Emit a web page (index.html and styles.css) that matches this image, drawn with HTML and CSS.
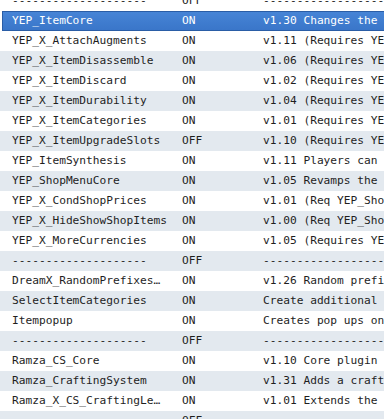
FILE: index.html
```html
<!DOCTYPE html>
<html lang="en">
<head>
    <meta charset="UTF-8">
    <title>Plugin Manager</title>
    <link rel="stylesheet" href="styles.css">
</head>
<body>
    <div class="plugin-list">
        <div class="row"><span class="name">--------------------</span><span class="status">OFF</span><span class="desc">--------------------------------</span></div>
        <div class="row selected"><span class="name">YEP_ItemCore</span><span class="status">ON</span><span class="desc">v1.30 Changes the way Items are handled</span></div>
        <div class="row"><span class="name">YEP_X_AttachAugments</span><span class="status">ON</span><span class="desc">v1.11 (Requires YEP_ItemCore)</span></div>
        <div class="row"><span class="name">YEP_X_ItemDisassemble</span><span class="status">ON</span><span class="desc">v1.06 (Requires YEP_ItemCore)</span></div>
        <div class="row"><span class="name">YEP_X_ItemDiscard</span><span class="status">ON</span><span class="desc">v1.02 (Requires YEP_ItemCore)</span></div>
        <div class="row"><span class="name">YEP_X_ItemDurability</span><span class="status">ON</span><span class="desc">v1.04 (Requires YEP_ItemCore)</span></div>
        <div class="row"><span class="name">YEP_X_ItemCategories</span><span class="status">ON</span><span class="desc">v1.01 (Requires YEP_ItemCore)</span></div>
        <div class="row"><span class="name">YEP_X_ItemUpgradeSlots</span><span class="status">OFF</span><span class="desc">v1.10 (Requires YEP_ItemCore)</span></div>
        <div class="row"><span class="name">YEP_ItemSynthesis</span><span class="status">ON</span><span class="desc">v1.11 Players can combine items</span></div>
        <div class="row"><span class="name">YEP_ShopMenuCore</span><span class="status">ON</span><span class="desc">v1.05 Revamps the shop scene</span></div>
        <div class="row"><span class="name">YEP_X_CondShopPrices</span><span class="status">ON</span><span class="desc">v1.01 (Req YEP_ShopMenuCore)</span></div>
        <div class="row"><span class="name">YEP_X_HideShowShopItems</span><span class="status">ON</span><span class="desc">v1.00 (Req YEP_ShopMenuCore)</span></div>
        <div class="row"><span class="name">YEP_X_MoreCurrencies</span><span class="status">ON</span><span class="desc">v1.05 (Requires YEP_ShopMenuCore)</span></div>
        <div class="row"><span class="name">--------------------</span><span class="status">OFF</span><span class="desc">--------------------------------</span></div>
        <div class="row"><span class="name">DreamX_RandomPrefixes…</span><span class="status">ON</span><span class="desc">v1.26 Random prefixes and suffixes</span></div>
        <div class="row"><span class="name">SelectItemCategories</span><span class="status">ON</span><span class="desc">Create additional item categories</span></div>
        <div class="row"><span class="name">Itempopup</span><span class="status">ON</span><span class="desc">Creates pop ups on item gain</span></div>
        <div class="row"><span class="name">--------------------</span><span class="status">OFF</span><span class="desc">--------------------------------</span></div>
        <div class="row"><span class="name">Ramza_CS_Core</span><span class="status">ON</span><span class="desc">v1.10 Core plugin for crafting</span></div>
        <div class="row"><span class="name">Ramza_CraftingSystem</span><span class="status">ON</span><span class="desc">v1.31 Adds a crafting system</span></div>
        <div class="row"><span class="name">Ramza_X_CS_CraftingLe…</span><span class="status">ON</span><span class="desc">v1.01 Extends the crafting system</span></div>
        <div class="row"><span class="name">--------------------</span><span class="status">OFF</span><span class="desc">--------------------------------</span></div>
    </div>
</body>
</html>
```

FILE: styles.css
```css
html, body {
    margin: 0;
    padding: 0;
    overflow: hidden;
    background-color: #fff;
}
.plugin-list {
    margin-top: -9px;
    font-family: "DejaVu Sans Mono", monospace;
    font-size: 11.2px;
    color: #1e1e1e;
}
.row {
    display: grid;
    grid-template-columns: 170px 81px 1fr;
    height: 20px;
    line-height: 20px;
    padding-left: 12px;
    white-space: nowrap;
    background-color: #fff;
}
.row:nth-child(even) {
    background-color: #e3e9ef;
}
.row span {
    overflow: hidden;
}
.row.selected {
    margin-left: 2px;
    padding-left: 9px;
    height: 18px;
    line-height: 18px;
    border: 1px solid #2a5da6;
    border-right: none;
    background: linear-gradient(#4684d6, #3a76c9);
    color: #fff;
}
```
